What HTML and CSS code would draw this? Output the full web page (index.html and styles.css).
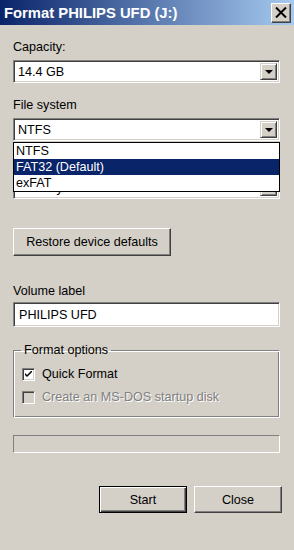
FILE: index.html
```html
<!DOCTYPE html>
<html lang="en">
<head>
  <meta charset="UTF-8">
  <meta name="viewport" content="width=device-width, initial-scale=1.0">
  <link rel="stylesheet" href="styles.css">
  <title>Format PHILIPS UFD (J:)</title>
</head>
<body>
  <div class="window">
    <div class="titlebar">
      <span class="title">Format PHILIPS UFD (J:)</span>
      <div class="close-box">
        <svg width="12" height="11" viewBox="0 0 12 11">
          <path d="M1 0.5 L11 10.5 M11 0.5 L1 10.5" stroke="#000" stroke-width="2" fill="none"/>
        </svg>
      </div>
    </div>

    <div class="content">
      <div class="label">Capacity:</div>
      <div class="combo">
        <span class="combo-text">14.4 GB</span>
        <span class="drop-btn"><span class="arrow"></span></span>
      </div>

      <div class="label">File system</div>
      <div class="combo-wrap">
        <div class="combo">
          <span class="combo-text">NTFS</span>
          <span class="drop-btn"><span class="arrow"></span></span>
        </div>
        <ul class="drop-list">
          <li>NTFS</li>
          <li class="selected">FAT32 (Default)</li>
          <li>exFAT</li>
        </ul>
      </div>

      <!-- allocation unit label sits under the open list -->
      <div class="label spacer"></div>
      <div class="combo">
        <span class="combo-text">4096 bytes</span>
        <span class="drop-btn"><span class="arrow"></span></span>
      </div>

      <button class="button restore">Restore device defaults</button>

      <div class="label volume-label">Volume label</div>
      <div class="textbox">PHILIPS UFD</div>

      <fieldset class="group">
        <legend>Format options</legend>
        <div class="check-row">
          <span class="checkbox checked">
            <svg width="7" height="7" viewBox="0 0 7 7">
              <path d="M0 2 L0 4 L2 6 L7 1 L7 -1 L2 4 Z" fill="#000"/>
            </svg>
          </span>
          <span>Quick Format</span>
        </div>
        <div class="check-row disabled">
          <span class="checkbox"></span>
          <span>Create an MS-DOS startup disk</span>
        </div>
      </fieldset>

      <div class="progress"></div>

      <div class="actions">
        <button class="button default">Start</button>
        <button class="button">Close</button>
      </div>
    </div>
  </div>
</body>
</html>
```

FILE: styles.css
```css
body {
    margin: 0;
    background-color: #d4d0c8;
    font-family: "Liberation Sans", Arial, sans-serif;
    font-size: 12.6px;
    color: #000;
}

.window {
    width: 294px;
    height: 550px;
    overflow: hidden;
}

.titlebar {
    height: 25px;
    display: flex;
    align-items: center;
    justify-content: space-between;
    padding: 0 3px 0 4px;
    background: linear-gradient(to right, #0a246a, #a6caf0);
}

.title {
    color: #fff;
    font-weight: bold;
    font-size: 14.8px;
    white-space: nowrap;
}

.close-box {
    width: 18px;
    height: 18px;
    display: flex;
    align-items: center;
    justify-content: center;
    background-color: #d4d0c8;
    border: 1px solid;
    border-color: #fff #404040 #404040 #fff;
    box-shadow: inset -1px -1px #808080;
}

.content {
    padding: 0 14px 0 13px;
    display: flex;
    flex-direction: column;
}

.label {
    line-height: 16px;
    margin-top: 14px;
    margin-bottom: 5px;
}

.spacer {
    height: 16px;
}

.combo,
.textbox {
    height: 23px;
    box-sizing: border-box;
    display: flex;
    align-items: center;
    background-color: #fff;
    border: 1px solid;
    border-color: #808080 #fff #fff #808080;
    box-shadow: inset 1px 1px #404040, inset -1px -1px #d4d0c8;
    padding: 2px;
}

.combo-text {
    flex: 1;
    padding-left: 2px;
}

.drop-btn {
    width: 17px;
    height: 100%;
    box-sizing: border-box;
    display: flex;
    align-items: center;
    justify-content: center;
    background-color: #d4d0c8;
    border: 1px solid;
    border-color: #d4d0c8 #404040 #404040 #d4d0c8;
    box-shadow: inset 1px 1px #fff, inset -1px -1px #808080;
}

.arrow {
    width: 0;
    height: 0;
    border-left: 4px solid transparent;
    border-right: 4px solid transparent;
    border-top: 4px solid #000;
    margin-top: 1px;
}

.combo-wrap {
    position: relative;
}

.drop-list {
    position: absolute;
    top: 100%;
    left: 0;
    right: 0;
    margin: 1px 0 0;
    padding: 0;
    list-style: none;
    background-color: #fff;
    border: 1px solid #000;
    z-index: 2;
}

.drop-list li {
    height: 16px;
    line-height: 16px;
    padding-left: 2px;
}

.drop-list li.selected {
    background-color: #0a246a;
    color: #fff;
}

.button {
    font-family: inherit;
    font-size: inherit;
    color: #000;
    background-color: #d4d0c8;
    border: 1px solid;
    border-color: #fff #404040 #404040 #fff;
    box-shadow: inset -1px -1px #808080;
    padding: 0;
    height: 28px;
}

.restore {
    align-self: flex-start;
    width: 158px;
    margin-top: 29px;
}

.volume-label {
    margin-top: 27px;
    margin-bottom: 3px;
}

.textbox {
    height: 25px;
    padding-left: 5px;
}

.group {
    margin: 16px 0 0;
    padding: 6px 8px 10px;
    border: 1px solid;
    border-color: #808080 #fff #fff #808080;
    box-shadow: inset 1px 1px #fff, inset -1px -1px #808080;
    height: 75px;
    box-sizing: border-box;
}

.group legend {
    padding: 0 3px;
    margin-left: -1px;
}

.check-row {
    display: flex;
    align-items: center;
    gap: 7px;
    height: 16px;
    margin-top: 3px;
}

.check-row + .check-row {
    margin-top: 7px;
}

.checkbox {
    width: 13px;
    height: 13px;
    box-sizing: border-box;
    display: flex;
    align-items: center;
    justify-content: center;
    background-color: #fff;
    border: 1px solid;
    border-color: #808080 #fff #fff #808080;
    box-shadow: inset 1px 1px #404040, inset -1px -1px #d4d0c8;
}

.disabled .checkbox {
    background-color: #d4d0c8;
}

.disabled span {
    color: #808080;
    text-shadow: 1px 1px #fff;
}

.progress {
    margin-top: 17px;
    height: 18px;
    box-sizing: border-box;
    border: 1px solid;
    border-color: #808080 #fff #fff #808080;
}

.actions {
    display: flex;
    justify-content: flex-end;
    gap: 7px;
    margin-top: 33px;
    margin-right: -2px;
}

.actions .button {
    width: 88px;
    height: 27px;
}

.button.default {
    border-color: #000;
    box-shadow: inset 1px 1px #fff, inset -1px -1px #404040, inset -2px -2px #808080;
}
```
